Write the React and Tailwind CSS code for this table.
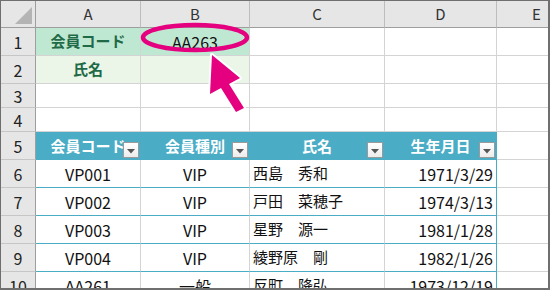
import React from 'react';

const members = [
  ['VP001', 'VIP', '西島　秀和', '1971/3/29'],
  ['VP002', 'VIP', '戸田　菜穂子', '1974/3/13'],
  ['VP003', 'VIP', '星野　源一', '1981/1/28'],
  ['VP004', 'VIP', '綾野原　剛', '1982/1/26'],
  ['AA261', '一般', '反町　降弘', '1973/12/19'],
];

const colHead = 'flex items-center justify-center bg-[#e6e6e6] border-r border-b border-r-[#bdbdbd] border-b-[#9e9e9e] text-[15px] text-[#333]';
const rowHead = 'flex items-center justify-center bg-[#e6e6e6] border-r border-b border-r-[#9e9e9e] border-b-[#c6c6c6] text-[16px] text-[#222]';
const cell = 'border-r border-b border-[#d4d4d4] bg-white';
const tableHead = 'relative flex items-center justify-center bg-[#4bacc6] border-r border-[#4bacc6] text-[15px] font-bold text-white';
const tableCell = 'flex items-center border-r border-b border-r-[#d4d4d4] border-b-[#4bacc6] bg-white text-[#111]';

function FilterButton() {
  return (
    <span className="absolute right-[1px] bottom-[2px] flex h-[16px] w-[16px] items-center justify-center border border-[#9a9a9a] bg-gradient-to-b from-white to-[#ececec]">
      <svg width="8" height="5" viewBox="0 0 8 5" className="mt-[2px]">
        <polygon points="0,0 8,0 4,4.5" fill="#555" />
      </svg>
    </span>
  );
}

export default function App() {
  return (
    <div className="relative h-[290px] w-[550px] overflow-hidden border-t border-l border-r-2 border-b-2 border-[#6f6f6f] bg-white font-['Noto_Sans_CJK_JP',sans-serif]">
      <div className="grid grid-cols-[35px_105px_109px_135px_112px_80px] grid-rows-[27px_28px_28px_24px_24px_28px_28px_28px_28px_28px_28px]">
        {/* column letters */}
        <div className="relative bg-[#e6e6e6] border-r border-b border-r-[#9e9e9e] border-b-[#9e9e9e]">
          <svg width="35" height="27" className="absolute left-0 top-0">
            <polygon points="14,23 31,23 31,6" fill="#b4b4b4" />
          </svg>
        </div>
        {['A', 'B', 'C', 'D', 'E'].map((c) => (
          <div key={c} className={colHead}>{c}</div>
        ))}

        {/* row 1 */}
        <div className={rowHead}>1</div>
        <div className="flex items-center justify-center border-r border-b border-[#d4d4d4] bg-[#bfe8d3] text-[15px] font-bold text-[#1f6a47]">会員コード</div>
        <div className="flex items-center justify-center border-r border-b border-[#d4d4d4] bg-[#bfe8d3] text-[16px] text-[#111]">AA263</div>
        <div className={cell} />
        <div className={cell} />
        <div className={cell} />

        {/* row 2 */}
        <div className={rowHead}>2</div>
        <div className="flex items-center justify-center border-r border-b border-[#d4d4d4] bg-[#ebf6e8] text-[15px] font-bold text-[#1f6a47]">氏名</div>
        <div className="border-r border-b border-[#d4d4d4] bg-[#ebf6e8]" />
        <div className={cell} />
        <div className={cell} />
        <div className={cell} />

        {/* rows 3-4 */}
        {[3, 4].map((n) => (
          <React.Fragment key={n}>
            <div className={rowHead}>{n}</div>
            <div className={cell} />
            <div className={cell} />
            <div className={cell} />
            <div className={cell} />
            <div className={cell} />
          </React.Fragment>
        ))}

        {/* table header */}
        <div className={rowHead}>5</div>
        {['会員コード', '会員種別', '氏名', '生年月日'].map((h) => (
          <div key={h} className={tableHead}>
            {h}
            <FilterButton />
          </div>
        ))}
        <div className={cell} />

        {/* table body */}
        {members.map((m, i) => (
          <React.Fragment key={m[0]}>
            <div className={rowHead}>{i + 6}</div>
            <div className={tableCell + ' justify-center text-[16px]'}>{m[0]}</div>
            <div className={tableCell + ' justify-center text-[16px]'}>{m[1]}</div>
            <div className={tableCell + ' justify-start pl-[3px] whitespace-pre text-[15px]'}>{m[2]}</div>
            <div className="flex items-center justify-end border-r border-b border-[#4bacc6] bg-white pr-[3px] text-[16px] text-[#111]">{m[3]}</div>
            <div className={cell} />
          </React.Fragment>
        ))}
      </div>

      {/* callout over B1 */}
      <svg width="550" height="290" className="pointer-events-none absolute left-[-1px] top-[-1px]">
        <ellipse cx="195" cy="37.5" rx="52" ry="12.5" fill="none" stroke="#e4007f" strokeWidth="4.5" />
        <polygon
          points="212,55 240,78 229,84 244,108 236,112 221,88 210,94"
          fill="#e4007f"
          stroke="white"
          strokeWidth="4"
          strokeLinejoin="round"
          paintOrder="stroke"
        />
      </svg>
    </div>
  );
}
